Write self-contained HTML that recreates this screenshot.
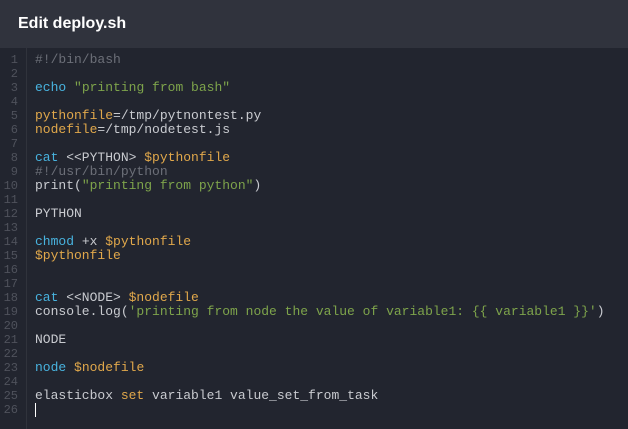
<!DOCTYPE html>
<html><head><style>
html,body{margin:0;padding:0;width:628px;height:429px;overflow:hidden;background:#22252f;}
.hd{position:absolute;left:0;top:0;width:628px;height:48px;background:#30333d;}
.hd span{position:absolute;left:18px;top:15px;font:bold 16px "Liberation Sans",sans-serif;color:#fff;}
.gut{position:absolute;left:0;top:48px;width:26px;height:381px;border-right:1px solid #30333c;}
.ln{position:absolute;left:0;top:53px;width:18px;text-align:right;font:12px/14px "Liberation Mono",monospace;color:#4f525c;white-space:pre;}
.code{position:absolute;left:35px;top:53px;font:13px/14px "Liberation Mono",monospace;color:#c9cbd0;white-space:pre;}
.c{color:#6c6f78}.k{color:#48b3df}.s{color:#7ea44b}.v{color:#e1a84b}
.cur{display:inline-block;width:1px;height:14px;background:#fff;vertical-align:top;}
</style></head><body>
<div class="hd"><span>Edit deploy.sh</span></div>
<div class="gut"></div>
<div class="ln">1
2
3
4
5
6
7
8
9
10
11
12
13
14
15
16
17
18
19
20
21
22
23
24
25
26</div>
<div class="code"><span class="c">#!/bin/bash</span>

<span class="k">echo</span> <span class="s">"printing from bash"</span>

<span class="v">pythonfile</span>=/tmp/pytnontest.py
<span class="v">nodefile</span>=/tmp/nodetest.js

<span class="k">cat</span> &lt;&lt;PYTHON&gt; <span class="v">$pythonfile</span>
<span class="c">#!/usr/bin/python</span>
print(<span class="s">"printing from python"</span>)

PYTHON

<span class="k">chmod</span> +x <span class="v">$pythonfile</span>
<span class="v">$pythonfile</span>


<span class="k">cat</span> &lt;&lt;NODE&gt; <span class="v">$nodefile</span>
console.log(<span class="s">'printing from node the value of variable1: {{ variable1 }}'</span>)

NODE

<span class="k">node</span> <span class="v">$nodefile</span>

elasticbox <span class="v">set</span> variable1 value_set_from_task
<span class="cur"></span></div>
</body></html>
